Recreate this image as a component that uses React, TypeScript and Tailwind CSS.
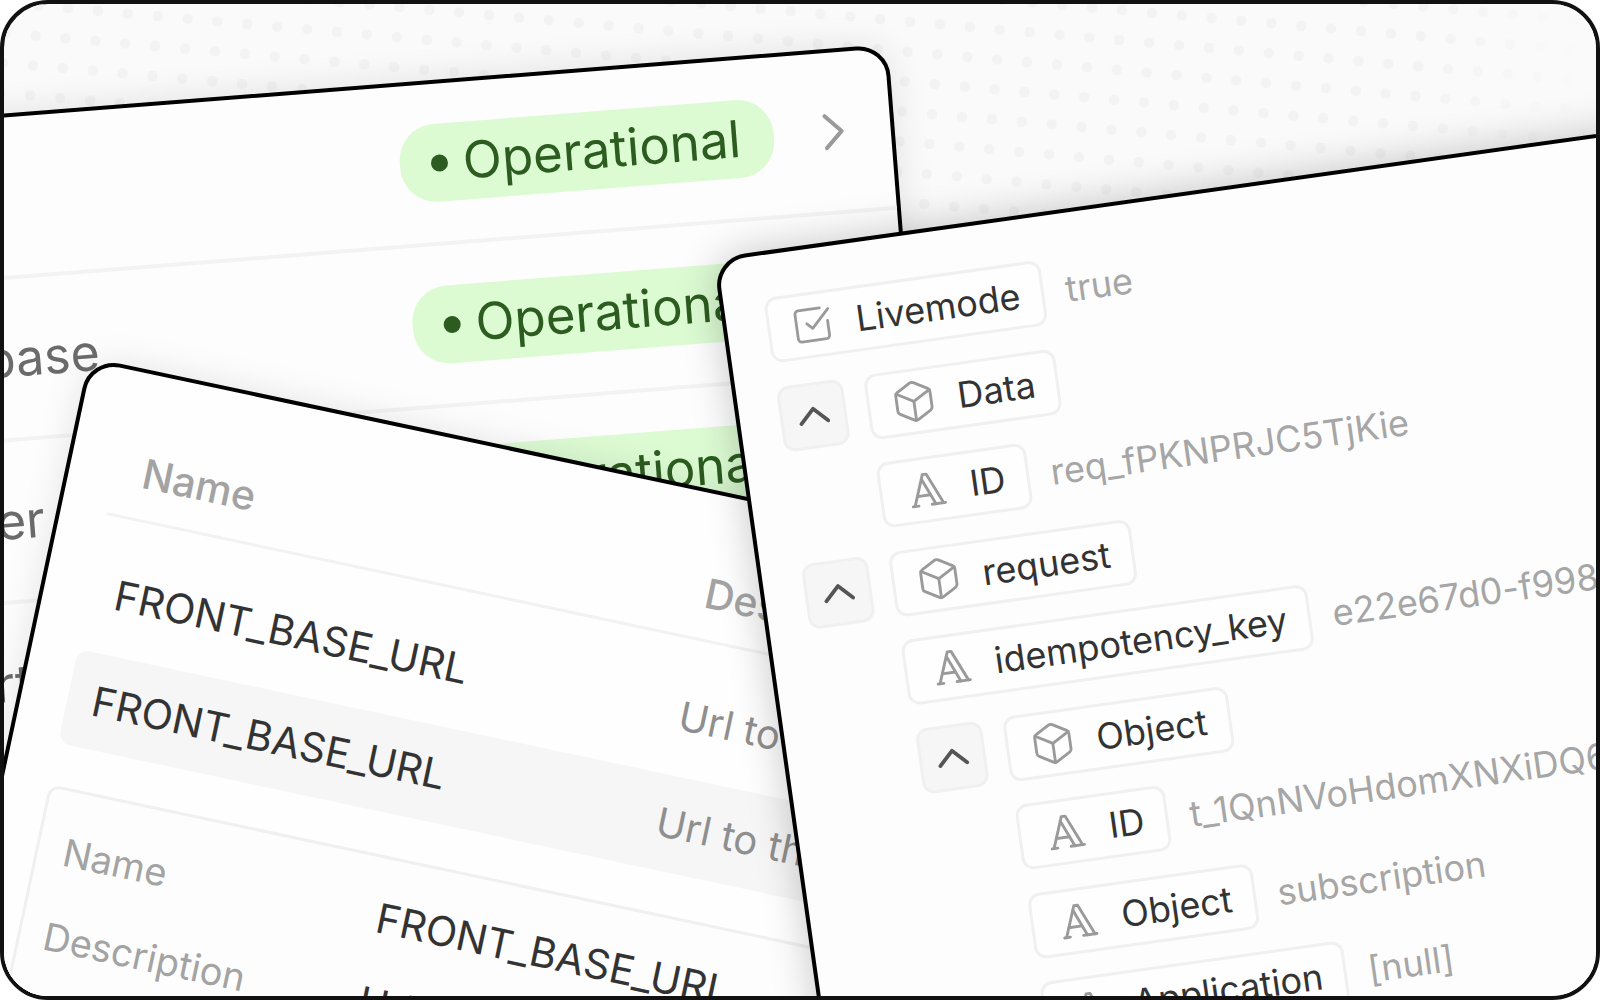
import { Box, ChevronRight, ChevronUp, SquareCheckBig } from "lucide-react";
import type { ReactNode } from "react";
import { TbTypography } from "react-icons/tb";

type KeyRow = {
  kind: "bool" | "object" | "text";
  name: string;
  value?: string;
  indent?: string;
};

const services = ["API", "Database", "Server", "Charts"];

const keyRows: KeyRow[] = [
  { kind: "bool", name: "Livemode", value: "true" },
  { kind: "object", name: "Data" },
  { kind: "text", name: "ID", value: "req_fPKNPRJC5TjKie", indent: "ml-[88px]" },
  { kind: "object", name: "request" },
  { kind: "text", name: "idempotency_key", value: "e22e67d0-f998-4a1c-9b7e", indent: "ml-[88px]" },
  { kind: "object", name: "Object", indent: "ml-[90px]" },
  { kind: "text", name: "ID", value: "t_1QnNVoHdomXNXiDQ6mKt2", indent: "ml-[178px]" },
  { kind: "text", name: "Object", value: "subscription", indent: "ml-[178px]" },
  { kind: "text", name: "Application", value: "[null]", indent: "ml-[178px]" },
];

function StatusCard() {
  return (
    <div className="absolute left-[-216px] top-[40px] h-[900px] w-[1100px] origin-top-right rotate-[-4.5deg] rounded-[32px] border-4 border-black bg-[#fdfdfd] shadow-[0_0_36px_rgba(0,0,0,0.1)]">
      {services.map((name) => (
        <div
          key={name}
          className="flex h-[162px] items-center justify-between border-b-4 border-[#f3f3f3] pl-[62px] pr-[39px]"
        >
          <span className="text-[50px] text-[#6b6b6b]">{name}</span>
          <div className="flex items-center gap-[42px]">
            <span className="flex h-[78px] w-[375px] items-center gap-[15px] rounded-[36px] bg-[#dcfbd3] pl-[31px] text-[51px] text-[#2c5c20]">
              <span className="h-[17px] w-[17px] rounded-full bg-[#2c5c20]" />
              Operational
            </span>
            <ChevronRight size={64} strokeWidth={1.5} className="-mx-[14px] text-[#9a9a9a]" />
          </div>
        </div>
      ))}
    </div>
  );
}

function TableRow({ name, desc, className }: { name: string; desc: string; className: string }) {
  return (
    <div className={`grid h-[96px] grid-cols-[577px_1fr] items-center rounded-xl px-[25px] text-[41px] ${className}`}>
      <span className="text-[#333333]">{name}</span>
      <span className="whitespace-nowrap text-[40px] text-[#8f8f8f]">{desc}</span>
    </div>
  );
}

function EnvCard() {
  return (
    <div className="absolute left-[85px] top-[353px] h-[1000px] w-[1000px] origin-top-left rotate-[12deg] rounded-[32px] border-4 border-black bg-[#fefefe] px-[46px] pt-[53px] shadow-[0_0_36px_rgba(0,0,0,0.1)]">
      <div className="grid h-[94px] grid-cols-[577px_1fr] items-center border-b-[3px] border-[#f2f2f2] px-[25px] text-[41px] font-medium text-[#a3a3a3]">
        <span className="ml-0.5">Name</span>
        <span>Description</span>
      </div>
      <TableRow name="FRONT_BASE_URL" desc="Url to the front" className="mt-[29px]" />
      <TableRow name="FRONT_BASE_URL" desc="Url to the front" className="mt-3 bg-[#f6f6f6]" />
      <div className="mt-[42px] h-[420px] rounded-xl border-[3px] border-[#f0f0f0] bg-[#fdfdfd] px-[25px] pt-[18px]">
        <div className="grid h-[84px] grid-cols-[320px_1fr] items-center text-[38px]">
          <span className="text-[#a3a3a3]">Name</span>
          <span className="text-[41px] text-[#333333]">FRONT_BASE_URL</span>
        </div>
        <div className="mt-3 grid grid-cols-[320px_1fr] text-[38px]">
          <span className="-ml-0.5 mt-1 text-[#a3a3a3]">Description</span>
          <span className="text-[40px] text-[#333333]">Url to the front</span>
        </div>
      </div>
    </div>
  );
}

function KeyIcon({ kind }: { kind: KeyRow["kind"] }): ReactNode {
  if (kind === "bool") return <SquareCheckBig size={42} strokeWidth={1.6} className="mr-0.5 shrink-0 text-[#9a9a9a]" />;
  if (kind === "object") return <Box size={46} strokeWidth={1.5} className="shrink-0 text-[#9a9a9a]" />;
  return <TbTypography size={46} strokeWidth={1.5} className="shrink-0 text-[#9a9a9a]" />;
}

function PayloadCard() {
  return (
    <div className="absolute left-[709px] top-[254px] flex h-[1100px] w-[1200px] origin-top-left rotate-[-8deg] flex-col gap-[23.5px] rounded-[32px] border-4 border-black bg-[#fdfdfd] pl-[40px] pt-[43px] shadow-[0_0_40px_rgba(0,0,0,0.22)]">
      {keyRows.map((row) => (
        <div key={row.name + row.indent} className={`flex h-[66px] items-center gap-[21px] ${row.indent ?? ""}`}>
          {row.kind === "object" && (
            <span className="flex h-[66px] w-[67px] items-center justify-center rounded-xl border-[3px] border-[#f0f0f0] bg-[#f6f6f6] text-[#555555]">
              <ChevronUp size={54} strokeWidth={1.7} />
            </span>
          )}
          <span className="flex h-[66px] items-center gap-[21px] rounded-xl border-[3px] border-[#f0f0f0] bg-[#fefefe] px-[21px] text-[36px] text-[#333333]">
            <KeyIcon kind={row.kind} />
            {row.name}
          </span>
          {row.value && <span className="ml-[1px] whitespace-nowrap text-[36px] text-[#a6a6a6]">{row.value}</span>}
        </div>
      ))}
    </div>
  );
}

export default function App() {
  return (
    <div className="h-[1000px] w-[1600px] bg-white font-['Inter',sans-serif]">
      <div className="relative h-full w-full overflow-hidden rounded-[48px] border-4 border-[#111111] bg-[#fafafa]">
        {/* dotted canvas */}
        <div className="absolute inset-[-300px] rotate-[5deg] bg-[radial-gradient(circle,#f3f3f3_5px,transparent_5.5px)] bg-[position:9px_25px] bg-[size:30px_30px]" />
        <div className="absolute right-0 top-0 h-[200px] w-[180px] bg-gradient-to-r from-transparent to-[#fafafa]" />
        <StatusCard />
        <EnvCard />
        <PayloadCard />
      </div>
    </div>
  );
}
